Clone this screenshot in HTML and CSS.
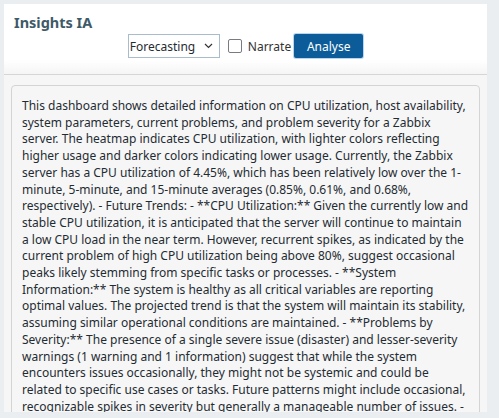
FILE: index.html
```html
<!DOCTYPE html>
<html>
<head>
<meta charset="utf-8">
<link rel="stylesheet" href="styles.css">
</head>
<body>
<div class="panel">
  <div class="header">
    <h1 class="title">Insights IA</h1>
    <div class="controls">
      <div class="select">
        <span>Forecasting</span>
        <svg class="chev" width="9" height="6" viewBox="0 0 9 6"><path d="M1 1 L4.5 4.5 L8 1" fill="none" stroke="#333" stroke-width="1.2"/></svg>
      </div>
      <label class="check"><span class="box"></span>Narrate</label>
      <button class="btn">Analyse</button>
    </div>
  </div>
  <div class="body">
    <div class="result">This dashboard shows detailed information on CPU utilization, host availability, system parameters, current problems, and problem severity for a Zabbix server. The heatmap indicates CPU utilization, with lighter colors reflecting higher usage and darker colors indicating lower usage. Currently, the Zabbix server has a CPU utilization of 4.45%, which has been relatively low over the 1-minute, 5-minute, and 15-minute averages (0.85%, 0.61%, and 0.68%, respectively). - Future Trends: - **CPU Utilization:** Given the currently low and stable CPU utilization, it is anticipated that the server will continue to maintain a low CPU load in the near term. However, recurrent spikes, as indicated by the current problem of high CPU utilization being above 80%, suggest occasional peaks likely stemming from specific tasks or processes. - **System Information:** The system is healthy as all critical variables are reporting optimal values. The projected trend is that the system will maintain its stability, assuming similar operational conditions are maintained. - **Problems by Severity:** The presence of a single severe issue (disaster) and lesser-severity warnings (1 warning and 1 information) suggest that while the system encounters issues occasionally, they might not be systemic and could be related to specific use cases or tasks. Future patterns might include occasional, recognizable spikes in severity but generally a manageable number of issues. - **Host Availability:** The host remains available and no further outages are expected in the near term.</div>
  </div>
</div>
</body>
</html>
```
FILE: styles.css
```css
html, body {
  margin: 0;
  padding: 0;
}
body {
  background: #ebeef0;
  padding: 4px 12px 0 4px;
  font-family: "Noto Sans", "Open Sans", sans-serif;
  color: #1f2c33;
}
.panel {
  width: 483px;
  height: 408px;
  background: #f6f6f6;
  display: flex;
  flex-direction: column;
  overflow: hidden;
}
.header {
  background: linear-gradient(to bottom, #ffffff 0, #ffffff 80%, #f5f5f5 100%);
  border-bottom: 1px solid #d6d6d6;
  height: 70px;
  box-sizing: content-box;
  padding: 0 10px;
  flex-shrink: 0;
}
.title {
  margin: 0;
  padding-top: 8px;
  font-size: 14.5px;
  font-weight: bold;
  color: #3e5a68;
  line-height: 20px;
}
.controls {
  display: flex;
  justify-content: center;
  align-items: center;
  margin-top: 2px;
  font-size: 12px;
}
.select {
  width: 92px;
  height: 24px;
  box-sizing: border-box;
  border: 1px solid #a9bccb;
  background: #fff;
  display: flex;
  align-items: center;
  justify-content: space-between;
  padding: 0 6px 0 1px;
  color: #1f2c33;
}
.chev {
  display: block;
}
.check {
  display: flex;
  align-items: center;
  margin-left: 8px;
  color: #333;
}
.box {
  width: 14px;
  height: 14px;
  box-sizing: border-box;
  border: 1.5px solid #7a7a84;
  border-radius: 2px;
  margin-right: 6px;
  background: #fff;
}
.btn {
  margin-left: 3px;
  height: 24px;
  width: 69px;
  background: #0b5c99;
  color: #fff;
  border: none;
  border-radius: 2px;
  box-shadow: 0 0 0 1px #b7d6f2;
  font-family: inherit;
  font-size: 12px;
  padding: 0;
}
.body {
  flex: 1;
  padding: 10px 7px 0 7px;
  min-height: 0;
}
.result {
  border: 1px solid #d4d4d4;
  border-radius: 4px;
  background: #f6f6f6;
  padding: 12px 10px 10px 10px;
  font-size: 12px;
  line-height: 16.7px;
  color: #1f2c33;
}
```
